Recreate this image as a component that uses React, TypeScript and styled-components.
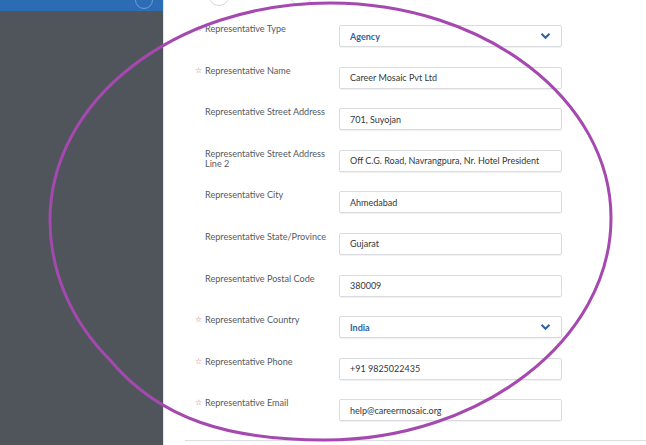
import { FC, Fragment } from "react";
import styled, { createGlobalStyle } from "styled-components";

const GlobalStyle = createGlobalStyle`
  html, body {
    margin: 0;
    padding: 0;
    background: #ffffff;
    overflow: hidden;
  }
`;

const Frame = styled.div`
  position: relative;
  width: 646px;
  height: 445px;
  display: flex;
  flex-direction: row;
  overflow: hidden;
  font-family: Lato, "Open Sans", sans-serif;
`;

const Sidebar = styled.div`
  width: 163px;
  flex-shrink: 0;
  display: flex;
  flex-direction: column;
  background-color: #50555c;
`;

const TopBar = styled.div`
  height: 11px;
  flex-shrink: 0;
  background-color: #2b6cb5;
  display: flex;
  justify-content: flex-end;
  align-items: flex-end;
  padding-right: 10px;
  overflow: hidden;
`;

const BarCircle = styled.div`
  width: 18px;
  height: 18px;
  border-radius: 50%;
  border: 1px solid #6f9fd6;
  margin-bottom: 2px;
  box-sizing: border-box;
`;

const Main = styled.div`
  flex: 1;
  display: flex;
  flex-direction: column;
  background: #ffffff;
  border-left: 1px solid #e2e4e7;
`;

const Steps = styled.div`
  height: 6px;
  flex-shrink: 0;
  display: flex;
  gap: 60px;
  padding-left: 44px;
  align-items: flex-end;
  overflow: hidden;
`;

const StepCircle = styled.div`
  width: 22px;
  height: 22px;
  flex-shrink: 0;
  border-radius: 50%;
  border: 1.5px solid #d6d8db;
  box-sizing: border-box;
`;

const Form = styled.div`
  flex-shrink: 0;
  display: grid;
  grid-template-columns: 10px 134px 223px;
  grid-auto-rows: 41.6px;
  padding: 19px 0 0 31px;
`;

const Star = styled.span`
  font-family: "DejaVu Sans", sans-serif;
  font-size: 8px;
  color: #c9646c;
  margin-top: -1px;
  line-height: 10px;
`;

const Label = styled.div`
  font-size: 9.1px;
  line-height: 10px;
  color: #555a60;
  margin-top: -1px;
  padding-right: 10px;
`;

const Field = styled.div<{ $select?: boolean }>`
  height: 22px;
  box-sizing: border-box;
  border: 1px solid #d9dbde;
  border-radius: 2px;
  box-shadow: 0 1px 1px rgba(0, 0, 0, 0.06);
  display: flex;
  align-items: center;
  justify-content: space-between;
  padding: 0 10px 0 10px;
  font-size: 9px;
  color: ${(p) => (p.$select ? "#2f62a3" : "#333740")};
  font-weight: ${(p) => (p.$select ? 700 : 400)};
  white-space: nowrap;
`;

const Chevron = styled.svg`
  width: 11px;
  height: 8px;
`;

const Divider = styled.div`
  flex-shrink: 0;
  margin: -1px 0 0 21px;
  height: 1px;
  background-color: #dcdee1;
`;

const Ellipse = styled.svg`
  position: absolute;
  left: 0;
  top: 0;
  pointer-events: none;
`;

type Row = {
  label: string;
  value: string;
  required?: boolean;
  select?: boolean;
};

const rows: Row[] = [
  { label: "Representative Type", value: "Agency", required: true, select: true },
  { label: "Representative Name", value: "Career Mosaic Pvt Ltd", required: true },
  { label: "Representative Street Address", value: "701, Suyojan" },
  {
    label: "Representative Street Address Line 2",
    value: "Off C.G. Road, Navrangpura, Nr. Hotel President",
  },
  { label: "Representative City", value: "Ahmedabad" },
  { label: "Representative State/Province", value: "Gujarat" },
  { label: "Representative Postal Code", value: "380009" },
  { label: "Representative Country", value: "India", required: true, select: true },
  { label: "Representative Phone", value: "+91 9825022435", required: true },
  { label: "Representative Email", value: "help@careermosaic.org", required: true },
];

const App: FC = () => {
  return (
    <Frame>
      <GlobalStyle />
      <Sidebar>
        <TopBar>
          <BarCircle />
        </TopBar>
      </Sidebar>
      <Main>
        <Steps>
          <StepCircle />
          <StepCircle />
        </Steps>
        <Form>
          {rows.map((r) => (
            <Fragment key={r.label}>
              <Star>{r.required ? "☆" : ""}</Star>
              <Label>{r.label}</Label>
              <Field $select={r.select}>
                <span>{r.value}</span>
                {r.select && (
                  <Chevron viewBox="0 0 11 8">
                    <path
                      d="M1.5 1.8 L5.5 5.8 L9.5 1.8"
                      fill="none"
                      stroke="#2f62a3"
                      strokeWidth="2"
                    />
                  </Chevron>
                )}
              </Field>
            </Fragment>
          ))}
        </Form>
        <Divider />
      </Main>
      <Ellipse width="646" height="445" viewBox="0 0 646 445">
        <path
          d="M330 3 C485 3 611 100 611 218 C611 340 480 440 325 440 C230 440 160 420 110 360 C70 320 50 270 50 220 C50 100 175 3 330 3 Z"
          fill="none"
          stroke="#a548b0"
          strokeWidth="3"
        />
      </Ellipse>
    </Frame>
  );
};

export default App;
